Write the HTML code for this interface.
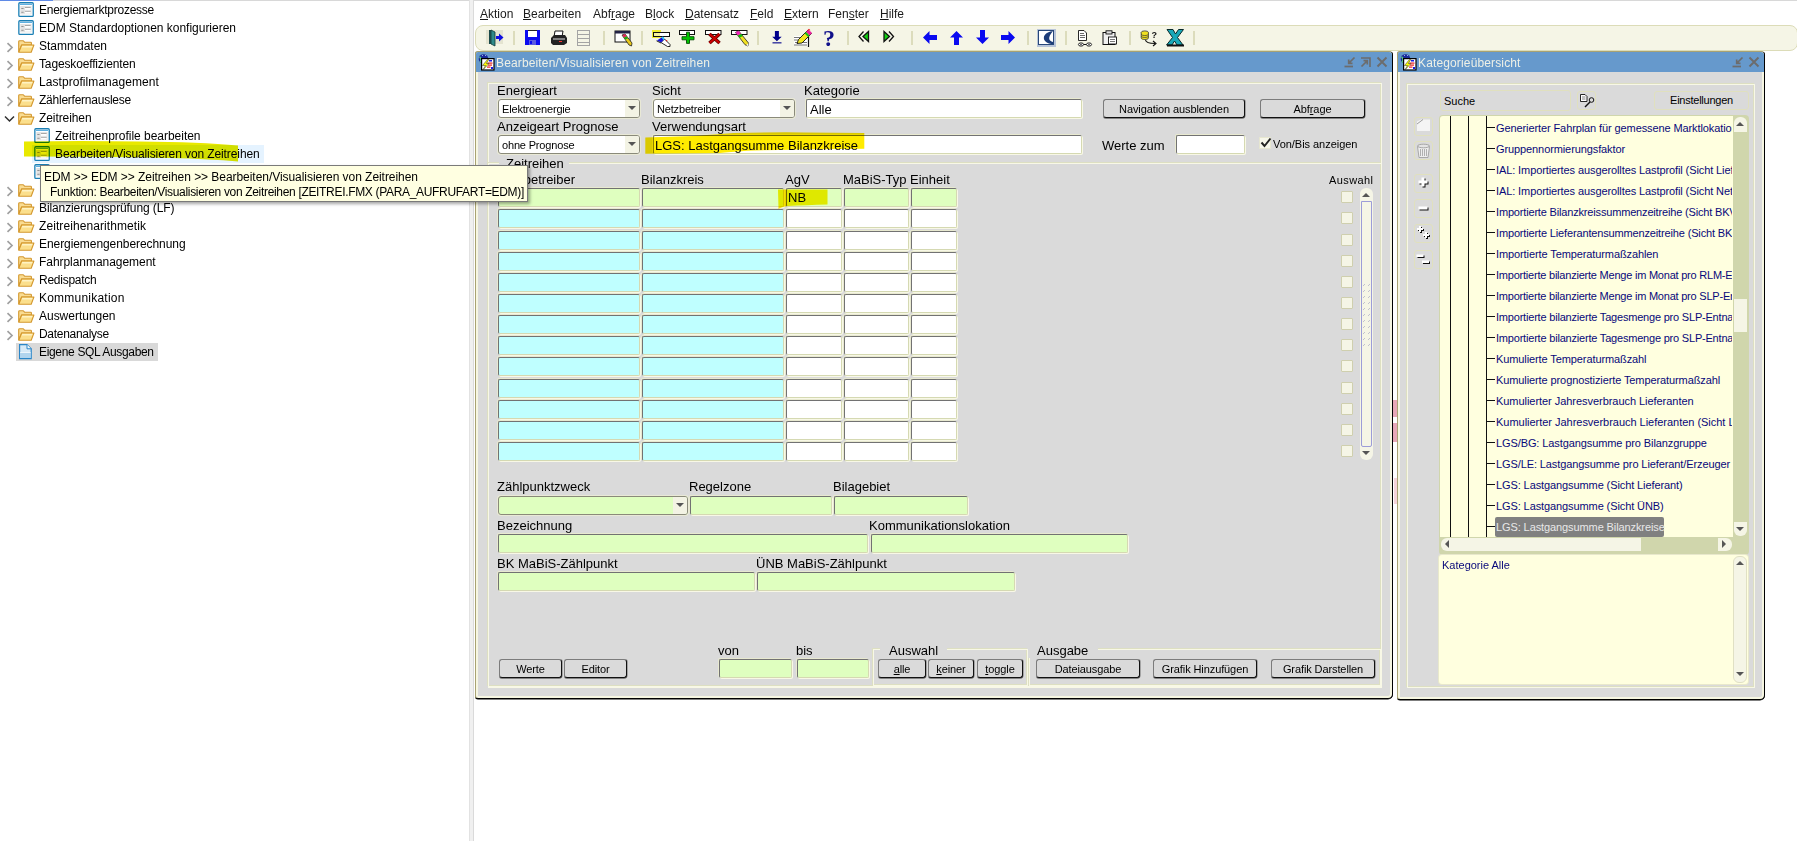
<!DOCTYPE html><html lang="de"><head><meta charset="utf-8"><title>EDM</title><style>
*{box-sizing:border-box;margin:0;padding:0}
html,body{width:1797px;height:841px;overflow:hidden;background:#fff}
body{position:relative;font-family:"Liberation Sans",sans-serif;font-size:12px;color:#000}
.a{position:absolute}
.t{position:absolute;white-space:nowrap;line-height:1}
/* left tree */
.lt{position:absolute;white-space:nowrap;font-size:12px;line-height:18px;height:18px;color:#000}
.chev{position:absolute;width:8px;height:10px}
/* oracle forms */
.lbl{position:absolute;white-space:nowrap;font-size:13px;line-height:15px;color:#000}
.fld{position:absolute;border:1px solid;border-color:#727272 #d5d9b2 #d5d9b2 #727272;border-radius:2px;box-shadow:1px 1px 0 0 #f8f8e6,-1px -1px 0 0 #e8e9d0;background:#fff}
.cmb{position:absolute;border:1px solid #8a8a7a;border-radius:3px;background:#fff;box-shadow:0 0 0 1px #e9e9d6;font-size:11px;line-height:18px;padding-left:3px;white-space:nowrap;letter-spacing:-0.17px}
.cmb i{position:absolute;right:0;top:0;bottom:0;width:14px;background:#f3f3e4;border-radius:0 2px 2px 0}
.cmb i:after{content:"";position:absolute;left:3px;top:6px;border:4px solid transparent;border-top:4px solid #555;border-bottom:0}
.g{background:#dfffbf}
.c{background:#bfffff}
.btn{position:absolute;border:1px solid #7c7c7c;border-right-color:#111;border-bottom-color:#111;border-radius:3px;background:#dadada;font-size:11px;line-height:16px;text-align:center;white-space:nowrap;color:#000;box-shadow:0 1px 0 rgba(0,0,0,.4),1px 0 0 rgba(0,0,0,.25);letter-spacing:-0.1px}
.cb{position:absolute;width:12px;height:12px;border:1px solid #cfcfae;background:#f5f5e6;border-radius:1px}
.tr{position:absolute;white-space:nowrap;font-size:11px;line-height:21px;height:21px;color:#08087a;letter-spacing:-0.1px}
u{text-decoration:underline}
</style></head><body>
<div class="a" style="left:0;top:0;width:53px;height:1px;background:#5f8ae6"></div>
<div class="a" style="left:53px;top:0;width:1744px;height:1px;background:#d8d8d8"></div>
<div class="a" style="left:469px;top:0;width:5px;height:841px;background:#f0f0f0;border-left:1px solid #e2e2e2;border-right:1px solid #dadada"></div>
<div class="a" style="left:32px;top:145px;width:232px;height:18px;background:#e5f3ff"></div>
<div class="a" style="left:16px;top:343px;width:142px;height:18px;background:#d9d9d9"></div>
<svg class="a" style="left:18px;top:2px" width="17" height="16" viewBox="0 0 17 16"><rect x="0.850" y="0.750" width="14.400" height="13.700" rx="1" fill="#fff" stroke="#1a7fb5" stroke-width="1.300"/><rect x="2" y="2" width="12" height="1" fill="#5fb0e0"/><rect x="2.300" y="4" width="11.200" height="8.300" fill="#e2e2e2"/><rect x="3.300" y="6" width="2.300" height="0.900" fill="#8a8a8a"/><rect x="3.300" y="9.800" width="2.300" height="0.900" fill="#8a8a8a"/><rect x="7" y="5.200" width="5.600" height="0.800" fill="#9a9a9a"/><rect x="7" y="6" width="5.600" height="1.800" fill="#fff"/><rect x="7" y="9" width="5.600" height="0.800" fill="#9a9a9a"/><rect x="7" y="9.800" width="5.600" height="1.800" fill="#fff"/></svg>
<div class="lt" style="left:39px;top:1px;letter-spacing:-0.253px">Energiemarktprozesse</div>
<svg class="a" style="left:18px;top:20px" width="17" height="16" viewBox="0 0 17 16"><rect x="0.850" y="0.750" width="14.400" height="13.700" rx="1" fill="#fff" stroke="#1a7fb5" stroke-width="1.300"/><rect x="2" y="2" width="12" height="1" fill="#5fb0e0"/><rect x="2.300" y="4" width="11.200" height="8.300" fill="#e2e2e2"/><rect x="3.300" y="6" width="2.300" height="0.900" fill="#8a8a8a"/><rect x="3.300" y="9.800" width="2.300" height="0.900" fill="#8a8a8a"/><rect x="7" y="5.200" width="5.600" height="0.800" fill="#9a9a9a"/><rect x="7" y="6" width="5.600" height="1.800" fill="#fff"/><rect x="7" y="9" width="5.600" height="0.800" fill="#9a9a9a"/><rect x="7" y="9.800" width="5.600" height="1.800" fill="#fff"/></svg>
<div class="lt" style="left:39px;top:19px;letter-spacing:-0.014px">EDM Standardoptionen konfigurieren</div>
<svg class="a" style="left:6px;top:42px" width="8" height="11" viewBox="0 0 8 11"><path d="M1.500 1.200 L6 5.500 L1.500 9.800" fill="none" stroke="#a0a0a0" stroke-width="1.700"/></svg>
<svg class="a" style="left:18px;top:40px" width="17" height="14" viewBox="0 0 17 14"><path d="M0.700 12 L0.700 1.600 Q0.700 0.700 1.600 0.700 L5.200 0.700 L6.600 2.200 L12.600 2.200 Q13.400 2.200 13.400 3 L13.400 5 L3.600 5 Z" fill="#f9dc92" stroke="#d4982f" stroke-width="1.100"/><path d="M3.700 5 L15.900 5 L13.200 12.300 L0.800 12.300 Z" fill="#fbdf8c" stroke="#d4982f" stroke-width="1.100" stroke-linejoin="round"/><path d="M4.300 6 L14.600 6 L14 7.500 L3.700 7.500 Z" fill="#fff3c4"/></svg>
<div class="lt" style="left:39px;top:37px;letter-spacing:-0.005px">Stammdaten</div>
<svg class="a" style="left:6px;top:60px" width="8" height="11" viewBox="0 0 8 11"><path d="M1.500 1.200 L6 5.500 L1.500 9.800" fill="none" stroke="#a0a0a0" stroke-width="1.700"/></svg>
<svg class="a" style="left:18px;top:58px" width="17" height="14" viewBox="0 0 17 14"><path d="M0.700 12 L0.700 1.600 Q0.700 0.700 1.600 0.700 L5.200 0.700 L6.600 2.200 L12.600 2.200 Q13.400 2.200 13.400 3 L13.400 5 L3.600 5 Z" fill="#f9dc92" stroke="#d4982f" stroke-width="1.100"/><path d="M3.700 5 L15.900 5 L13.200 12.300 L0.800 12.300 Z" fill="#fbdf8c" stroke="#d4982f" stroke-width="1.100" stroke-linejoin="round"/><path d="M4.300 6 L14.600 6 L14 7.500 L3.700 7.500 Z" fill="#fff3c4"/></svg>
<div class="lt" style="left:39px;top:55px;letter-spacing:-0.149px">Tageskoeffizienten</div>
<svg class="a" style="left:6px;top:78px" width="8" height="11" viewBox="0 0 8 11"><path d="M1.500 1.200 L6 5.500 L1.500 9.800" fill="none" stroke="#a0a0a0" stroke-width="1.700"/></svg>
<svg class="a" style="left:18px;top:76px" width="17" height="14" viewBox="0 0 17 14"><path d="M0.700 12 L0.700 1.600 Q0.700 0.700 1.600 0.700 L5.200 0.700 L6.600 2.200 L12.600 2.200 Q13.400 2.200 13.400 3 L13.400 5 L3.600 5 Z" fill="#f9dc92" stroke="#d4982f" stroke-width="1.100"/><path d="M3.700 5 L15.900 5 L13.200 12.300 L0.800 12.300 Z" fill="#fbdf8c" stroke="#d4982f" stroke-width="1.100" stroke-linejoin="round"/><path d="M4.300 6 L14.600 6 L14 7.500 L3.700 7.500 Z" fill="#fff3c4"/></svg>
<div class="lt" style="left:39px;top:73px;letter-spacing:0.063px">Lastprofilmanagement</div>
<svg class="a" style="left:6px;top:96px" width="8" height="11" viewBox="0 0 8 11"><path d="M1.500 1.200 L6 5.500 L1.500 9.800" fill="none" stroke="#a0a0a0" stroke-width="1.700"/></svg>
<svg class="a" style="left:18px;top:94px" width="17" height="14" viewBox="0 0 17 14"><path d="M0.700 12 L0.700 1.600 Q0.700 0.700 1.600 0.700 L5.200 0.700 L6.600 2.200 L12.600 2.200 Q13.400 2.200 13.400 3 L13.400 5 L3.600 5 Z" fill="#f9dc92" stroke="#d4982f" stroke-width="1.100"/><path d="M3.700 5 L15.900 5 L13.200 12.300 L0.800 12.300 Z" fill="#fbdf8c" stroke="#d4982f" stroke-width="1.100" stroke-linejoin="round"/><path d="M4.300 6 L14.600 6 L14 7.500 L3.700 7.500 Z" fill="#fff3c4"/></svg>
<div class="lt" style="left:39px;top:91px;letter-spacing:-0.239px">Zählerfernauslese</div>
<svg class="a" style="left:4px;top:115px" width="11" height="8" viewBox="0 0 11 8"><path d="M1 1.5 L5.5 6 L10 1.5" fill="none" stroke="#303030" stroke-width="1.5"/></svg>
<svg class="a" style="left:18px;top:112px" width="17" height="14" viewBox="0 0 17 14"><path d="M0.700 12 L0.700 1.600 Q0.700 0.700 1.600 0.700 L5.200 0.700 L6.600 2.200 L12.600 2.200 Q13.400 2.200 13.400 3 L13.400 5 L3.600 5 Z" fill="#f9dc92" stroke="#d4982f" stroke-width="1.100"/><path d="M3.700 5 L15.900 5 L13.200 12.300 L0.800 12.300 Z" fill="#fbdf8c" stroke="#d4982f" stroke-width="1.100" stroke-linejoin="round"/><path d="M4.300 6 L14.600 6 L14 7.500 L3.700 7.500 Z" fill="#fff3c4"/></svg>
<div class="lt" style="left:39px;top:109px;letter-spacing:-0.087px">Zeitreihen</div>
<svg class="a" style="left:34px;top:128px" width="17" height="16" viewBox="0 0 17 16"><rect x="0.850" y="0.750" width="14.400" height="13.700" rx="1" fill="#fff" stroke="#1a7fb5" stroke-width="1.300"/><rect x="2" y="2" width="12" height="1" fill="#5fb0e0"/><rect x="2.300" y="4" width="11.200" height="8.300" fill="#e2e2e2"/><rect x="3.300" y="6" width="2.300" height="0.900" fill="#8a8a8a"/><rect x="3.300" y="9.800" width="2.300" height="0.900" fill="#8a8a8a"/><rect x="7" y="5.200" width="5.600" height="0.800" fill="#9a9a9a"/><rect x="7" y="6" width="5.600" height="1.800" fill="#fff"/><rect x="7" y="9" width="5.600" height="0.800" fill="#9a9a9a"/><rect x="7" y="9.800" width="5.600" height="1.800" fill="#fff"/></svg>
<div class="lt" style="left:55px;top:127px;letter-spacing:-0.021px">Zeitreihenprofile bearbeiten</div>
<svg class="a" style="left:34px;top:146px" width="17" height="16" viewBox="0 0 17 16"><rect x="0.850" y="0.750" width="14.400" height="13.700" rx="1" fill="#fff" stroke="#1a7fb5" stroke-width="1.300"/><rect x="2" y="2" width="12" height="1" fill="#5fb0e0"/><rect x="2.300" y="4" width="11.200" height="8.300" fill="#e2e2e2"/><rect x="3.300" y="6" width="2.300" height="0.900" fill="#8a8a8a"/><rect x="3.300" y="9.800" width="2.300" height="0.900" fill="#8a8a8a"/><rect x="7" y="5.200" width="5.600" height="0.800" fill="#9a9a9a"/><rect x="7" y="6" width="5.600" height="1.800" fill="#fff"/><rect x="7" y="9" width="5.600" height="0.800" fill="#9a9a9a"/><rect x="7" y="9.800" width="5.600" height="1.800" fill="#fff"/></svg>
<div class="lt" style="left:55px;top:145px;letter-spacing:-0.102px">Bearbeiten/Visualisieren von Zeitreihen</div>
<svg class="a" style="left:34px;top:164px" width="17" height="16" viewBox="0 0 17 16"><rect x="0.850" y="0.750" width="14.400" height="13.700" rx="1" fill="#fff" stroke="#1a7fb5" stroke-width="1.300"/><rect x="2" y="2" width="12" height="1" fill="#5fb0e0"/><rect x="2.300" y="4" width="11.200" height="8.300" fill="#e2e2e2"/><rect x="3.300" y="6" width="2.300" height="0.900" fill="#8a8a8a"/><rect x="3.300" y="9.800" width="2.300" height="0.900" fill="#8a8a8a"/><rect x="7" y="5.200" width="5.600" height="0.800" fill="#9a9a9a"/><rect x="7" y="6" width="5.600" height="1.800" fill="#fff"/><rect x="7" y="9" width="5.600" height="0.800" fill="#9a9a9a"/><rect x="7" y="9.800" width="5.600" height="1.800" fill="#fff"/></svg>
<svg class="a" style="left:6px;top:186px" width="8" height="11" viewBox="0 0 8 11"><path d="M1.500 1.200 L6 5.500 L1.500 9.800" fill="none" stroke="#a0a0a0" stroke-width="1.700"/></svg>
<svg class="a" style="left:18px;top:184px" width="17" height="14" viewBox="0 0 17 14"><path d="M0.700 12 L0.700 1.600 Q0.700 0.700 1.600 0.700 L5.200 0.700 L6.600 2.200 L12.600 2.200 Q13.400 2.200 13.400 3 L13.400 5 L3.600 5 Z" fill="#f9dc92" stroke="#d4982f" stroke-width="1.100"/><path d="M3.700 5 L15.900 5 L13.200 12.300 L0.800 12.300 Z" fill="#fbdf8c" stroke="#d4982f" stroke-width="1.100" stroke-linejoin="round"/><path d="M4.300 6 L14.600 6 L14 7.500 L3.700 7.500 Z" fill="#fff3c4"/></svg>
<svg class="a" style="left:6px;top:204px" width="8" height="11" viewBox="0 0 8 11"><path d="M1.500 1.200 L6 5.500 L1.500 9.800" fill="none" stroke="#a0a0a0" stroke-width="1.700"/></svg>
<svg class="a" style="left:18px;top:202px" width="17" height="14" viewBox="0 0 17 14"><path d="M0.700 12 L0.700 1.600 Q0.700 0.700 1.600 0.700 L5.200 0.700 L6.600 2.200 L12.600 2.200 Q13.400 2.200 13.400 3 L13.400 5 L3.600 5 Z" fill="#f9dc92" stroke="#d4982f" stroke-width="1.100"/><path d="M3.700 5 L15.900 5 L13.200 12.300 L0.800 12.300 Z" fill="#fbdf8c" stroke="#d4982f" stroke-width="1.100" stroke-linejoin="round"/><path d="M4.300 6 L14.600 6 L14 7.500 L3.700 7.500 Z" fill="#fff3c4"/></svg>
<div class="lt" style="left:39px;top:199px;letter-spacing:-0.111px">Bilanzierungsprüfung (LF)</div>
<svg class="a" style="left:6px;top:222px" width="8" height="11" viewBox="0 0 8 11"><path d="M1.500 1.200 L6 5.500 L1.500 9.800" fill="none" stroke="#a0a0a0" stroke-width="1.700"/></svg>
<svg class="a" style="left:18px;top:220px" width="17" height="14" viewBox="0 0 17 14"><path d="M0.700 12 L0.700 1.600 Q0.700 0.700 1.600 0.700 L5.200 0.700 L6.600 2.200 L12.600 2.200 Q13.400 2.200 13.400 3 L13.400 5 L3.600 5 Z" fill="#f9dc92" stroke="#d4982f" stroke-width="1.100"/><path d="M3.700 5 L15.900 5 L13.200 12.300 L0.800 12.300 Z" fill="#fbdf8c" stroke="#d4982f" stroke-width="1.100" stroke-linejoin="round"/><path d="M4.300 6 L14.600 6 L14 7.500 L3.700 7.500 Z" fill="#fff3c4"/></svg>
<div class="lt" style="left:39px;top:217px;letter-spacing:0.081px">Zeitreihenarithmetik</div>
<svg class="a" style="left:6px;top:240px" width="8" height="11" viewBox="0 0 8 11"><path d="M1.500 1.200 L6 5.500 L1.500 9.800" fill="none" stroke="#a0a0a0" stroke-width="1.700"/></svg>
<svg class="a" style="left:18px;top:238px" width="17" height="14" viewBox="0 0 17 14"><path d="M0.700 12 L0.700 1.600 Q0.700 0.700 1.600 0.700 L5.200 0.700 L6.600 2.200 L12.600 2.200 Q13.400 2.200 13.400 3 L13.400 5 L3.600 5 Z" fill="#f9dc92" stroke="#d4982f" stroke-width="1.100"/><path d="M3.700 5 L15.900 5 L13.200 12.300 L0.800 12.300 Z" fill="#fbdf8c" stroke="#d4982f" stroke-width="1.100" stroke-linejoin="round"/><path d="M4.300 6 L14.600 6 L14 7.500 L3.700 7.500 Z" fill="#fff3c4"/></svg>
<div class="lt" style="left:39px;top:235px;letter-spacing:-0.071px">Energiemengenberechnung</div>
<svg class="a" style="left:6px;top:258px" width="8" height="11" viewBox="0 0 8 11"><path d="M1.500 1.200 L6 5.500 L1.500 9.800" fill="none" stroke="#a0a0a0" stroke-width="1.700"/></svg>
<svg class="a" style="left:18px;top:256px" width="17" height="14" viewBox="0 0 17 14"><path d="M0.700 12 L0.700 1.600 Q0.700 0.700 1.600 0.700 L5.200 0.700 L6.600 2.200 L12.600 2.200 Q13.400 2.200 13.400 3 L13.400 5 L3.600 5 Z" fill="#f9dc92" stroke="#d4982f" stroke-width="1.100"/><path d="M3.700 5 L15.900 5 L13.200 12.300 L0.800 12.300 Z" fill="#fbdf8c" stroke="#d4982f" stroke-width="1.100" stroke-linejoin="round"/><path d="M4.300 6 L14.600 6 L14 7.500 L3.700 7.500 Z" fill="#fff3c4"/></svg>
<div class="lt" style="left:39px;top:253px;letter-spacing:-0.045px">Fahrplanmanagement</div>
<svg class="a" style="left:6px;top:276px" width="8" height="11" viewBox="0 0 8 11"><path d="M1.500 1.200 L6 5.500 L1.500 9.800" fill="none" stroke="#a0a0a0" stroke-width="1.700"/></svg>
<svg class="a" style="left:18px;top:274px" width="17" height="14" viewBox="0 0 17 14"><path d="M0.700 12 L0.700 1.600 Q0.700 0.700 1.600 0.700 L5.200 0.700 L6.600 2.200 L12.600 2.200 Q13.400 2.200 13.400 3 L13.400 5 L3.600 5 Z" fill="#f9dc92" stroke="#d4982f" stroke-width="1.100"/><path d="M3.700 5 L15.900 5 L13.200 12.300 L0.800 12.300 Z" fill="#fbdf8c" stroke="#d4982f" stroke-width="1.100" stroke-linejoin="round"/><path d="M4.300 6 L14.600 6 L14 7.500 L3.700 7.500 Z" fill="#fff3c4"/></svg>
<div class="lt" style="left:39px;top:271px;letter-spacing:-0.255px">Redispatch</div>
<svg class="a" style="left:6px;top:294px" width="8" height="11" viewBox="0 0 8 11"><path d="M1.500 1.200 L6 5.500 L1.500 9.800" fill="none" stroke="#a0a0a0" stroke-width="1.700"/></svg>
<svg class="a" style="left:18px;top:292px" width="17" height="14" viewBox="0 0 17 14"><path d="M0.700 12 L0.700 1.600 Q0.700 0.700 1.600 0.700 L5.200 0.700 L6.600 2.200 L12.600 2.200 Q13.400 2.200 13.400 3 L13.400 5 L3.600 5 Z" fill="#f9dc92" stroke="#d4982f" stroke-width="1.100"/><path d="M3.700 5 L15.900 5 L13.200 12.300 L0.800 12.300 Z" fill="#fbdf8c" stroke="#d4982f" stroke-width="1.100" stroke-linejoin="round"/><path d="M4.300 6 L14.600 6 L14 7.500 L3.700 7.500 Z" fill="#fff3c4"/></svg>
<div class="lt" style="left:39px;top:289px;letter-spacing:0.222px">Kommunikation</div>
<svg class="a" style="left:6px;top:312px" width="8" height="11" viewBox="0 0 8 11"><path d="M1.500 1.200 L6 5.500 L1.500 9.800" fill="none" stroke="#a0a0a0" stroke-width="1.700"/></svg>
<svg class="a" style="left:18px;top:310px" width="17" height="14" viewBox="0 0 17 14"><path d="M0.700 12 L0.700 1.600 Q0.700 0.700 1.600 0.700 L5.200 0.700 L6.600 2.200 L12.600 2.200 Q13.400 2.200 13.400 3 L13.400 5 L3.600 5 Z" fill="#f9dc92" stroke="#d4982f" stroke-width="1.100"/><path d="M3.700 5 L15.900 5 L13.200 12.300 L0.800 12.300 Z" fill="#fbdf8c" stroke="#d4982f" stroke-width="1.100" stroke-linejoin="round"/><path d="M4.300 6 L14.600 6 L14 7.500 L3.700 7.500 Z" fill="#fff3c4"/></svg>
<div class="lt" style="left:39px;top:307px;letter-spacing:-0.018px">Auswertungen</div>
<svg class="a" style="left:6px;top:330px" width="8" height="11" viewBox="0 0 8 11"><path d="M1.500 1.200 L6 5.500 L1.500 9.800" fill="none" stroke="#a0a0a0" stroke-width="1.700"/></svg>
<svg class="a" style="left:18px;top:328px" width="17" height="14" viewBox="0 0 17 14"><path d="M0.700 12 L0.700 1.600 Q0.700 0.700 1.600 0.700 L5.200 0.700 L6.600 2.200 L12.600 2.200 Q13.400 2.200 13.400 3 L13.400 5 L3.600 5 Z" fill="#f9dc92" stroke="#d4982f" stroke-width="1.100"/><path d="M3.700 5 L15.900 5 L13.200 12.300 L0.800 12.300 Z" fill="#fbdf8c" stroke="#d4982f" stroke-width="1.100" stroke-linejoin="round"/><path d="M4.300 6 L14.600 6 L14 7.500 L3.700 7.500 Z" fill="#fff3c4"/></svg>
<div class="lt" style="left:39px;top:325px;letter-spacing:-0.299px">Datenanalyse</div>
<svg class="a" style="left:18px;top:344px" width="15" height="16" viewBox="0 0 15 16"><path d="M1.600 0.600 L9 0.600 L13.200 4.800 L13.200 14.600 L1.600 14.600 Z" fill="#d8eaf7" stroke="#2a86c8" stroke-width="1.200"/><path d="M2.200 9 L12.600 9 L12.600 14 L2.200 14 Z" fill="#b2d5ee"/><path d="M2.200 8 L12.600 8 L12.600 9 L2.200 9 Z" fill="#eef6fc"/><path d="M9 0.600 L9 4.800 L13.200 4.800" fill="#f4fafe" stroke="#2a86c8" stroke-width="1"/></svg>
<div class="lt" style="left:39px;top:343px;letter-spacing:-0.331px">Eigene SQL Ausgaben</div>
<svg class="a" style="left:20px;top:136px;mix-blend-mode:multiply" width="225" height="30" viewBox="0 0 225 30"><path d="M4 5.500 Q60 4.500 120 5.500 Q180 6 218 9.500 L218 25.500 Q190 23 150 22 Q90 20.500 4 20.500 Z" fill="#e9e900"/></svg>
<div class="t" style="left:480px;top:7px;font-size:12px;line-height:14px;color:#1a1a1a"><u>A</u>ktion</div>
<div class="t" style="left:523px;top:7px;font-size:12px;line-height:14px;color:#1a1a1a"><u>B</u>earbeiten</div>
<div class="t" style="left:593px;top:7px;font-size:12px;line-height:14px;color:#1a1a1a">Abf<u>r</u>age</div>
<div class="t" style="left:645px;top:7px;font-size:12px;line-height:14px;color:#1a1a1a">B<u>l</u>ock</div>
<div class="t" style="left:685px;top:7px;font-size:12px;line-height:14px;color:#1a1a1a"><u>D</u>atensatz</div>
<div class="t" style="left:750px;top:7px;font-size:12px;line-height:14px;color:#1a1a1a"><u>F</u>eld</div>
<div class="t" style="left:784px;top:7px;font-size:12px;line-height:14px;color:#1a1a1a"><u>E</u>xtern</div>
<div class="t" style="left:828px;top:7px;font-size:12px;line-height:14px;color:#1a1a1a">Fen<u>s</u>ter</div>
<div class="t" style="left:880px;top:7px;font-size:12px;line-height:14px;color:#1a1a1a"><u>H</u>ilfe</div>
<div class="a" style="left:475px;top:25px;width:1323px;height:26px;background:#f5f5e6;border:1px solid #dcdcb8;border-radius:8px"></div>
<div class="a" style="left:513px;top:31px;width:2px;height:14px;background:#dcdcbc"></div>
<div class="a" style="left:603px;top:31px;width:2px;height:14px;background:#dcdcbc"></div>
<div class="a" style="left:641px;top:31px;width:2px;height:14px;background:#dcdcbc"></div>
<div class="a" style="left:757px;top:31px;width:2px;height:14px;background:#dcdcbc"></div>
<div class="a" style="left:847px;top:31px;width:2px;height:14px;background:#dcdcbc"></div>
<div class="a" style="left:911px;top:31px;width:2px;height:14px;background:#dcdcbc"></div>
<div class="a" style="left:1027px;top:31px;width:2px;height:14px;background:#dcdcbc"></div>
<div class="a" style="left:1065px;top:31px;width:2px;height:14px;background:#dcdcbc"></div>
<div class="a" style="left:1129px;top:31px;width:2px;height:14px;background:#dcdcbc"></div>
<div class="a" style="left:1193px;top:31px;width:2px;height:14px;background:#dcdcbc"></div>
<svg class="a" style="left:486px;top:29px" width="18" height="18" viewBox="0 0 18 18"><rect x="0" y="1" width="17" height="14" fill="#e4e4d0"/><path d="M5 1 L9 3 L9 17 L5 15 Z" fill="#2f8a8a" stroke="#103838" stroke-width="0.8"/><path d="M3 1 L5 1 L5 15 L3 15 Z" fill="#1a4a4a"/><path d="M10 7 L13 7 L13 4.5 L17.5 8.5 L13 12.5 L13 10 L10 10 Z" fill="#1010e0"/></svg>
<svg class="a" style="left:525px;top:30px" width="15" height="15" viewBox="0 0 15 15"><path d="M0 0 H15 V15 H0 Z" fill="#0b0bf0"/><rect x="3" y="1" width="9" height="6" fill="#fff"/><rect x="3" y="0" width="9" height="1" fill="#222" /><rect x="4" y="10" width="7" height="5" fill="#5a5ae0"/><rect x="5" y="11" width="2" height="3" fill="#0b0bf0"/></svg>
<svg class="a" style="left:550px;top:30px" width="18" height="16" viewBox="0 0 18 16"><path d="M5 1 L13 1 L12 7 L4 7 Z" fill="#fff" stroke="#111"/><path d="M1 8 L4 5 L15 5 L17 8 L17 13 L14 15 L3 15 L1 13 Z" fill="#222"/><path d="M3 9 L15 9" stroke="#ddd" stroke-width="1"/><rect x="9" y="11" width="3" height="1" fill="#f33"/></svg>
<svg class="a" style="left:577px;top:30px" width="13" height="16" viewBox="0 0 13 16"><rect x="0.500" y="0.500" width="12" height="15" fill="#f5f5e6" stroke="#a4a4a4"/><path d="M1 4.500 H12 M1 8.500 H12 M1 12.500 H12" stroke="#a4a4a4" stroke-width="1"/></svg>
<svg class="a" style="left:614px;top:30px" width="20" height="18" viewBox="0 0 20 18"><rect x="1" y="1" width="15" height="11" fill="#fff" stroke="#111"/><rect x="1" y="1" width="15" height="2.5" fill="#224"/><path d="M8 5 L11 4 L18 13 L17.5 16 L15 15 Z" fill="#e8c81c" stroke="#222" stroke-width="0.8"/><path d="M8.5 5 L11 4 L12.5 6.5 L10 7.5Z" fill="#e02060"/><path d="M10 7.5 L12.5 6.5 L14 8.5 L11.5 9.5Z" fill="#18b018"/></svg>
<svg class="a" style="left:651px;top:29px" width="20" height="19" viewBox="0 0 20 19"><rect x="1" y="1" width="9" height="8" fill="#f0ec30"/><rect x="2.500" y="3.500" width="16" height="4" fill="#fff" stroke="#111"/><rect x="3" y="4" width="6" height="3" fill="#f6f29a"/><path d="M10 13.500 L13.500 10 L19 15.500 L19 17.500 L16.500 17.500 Z" fill="#fff" stroke="#111" stroke-width="0.900"/><path d="M6 11.500 L12 7.500 L13.500 10 L10 13.500 Z" fill="#1414e0"/><path d="M10.500 8.300 L12 7.500 L13.500 10 L12.300 11 Z" fill="#30d8f0"/><path d="M5.500 11.800 L10 14" stroke="#111" stroke-width="0.900"/><rect x="15" y="11" width="1.200" height="1.200" fill="#e02020"/></svg>
<svg class="a" style="left:678px;top:29px" width="19" height="18" viewBox="0 0 19 18"><rect x="1.500" y="1.500" width="15" height="4" fill="#fff" stroke="#111"/><path d="M8.500 3.200 H11.500 V7.700 H16 V10.800 H11.500 V14.400 H8.500 V10.800 H4 V7.700 H8.500 Z" fill="#00c400" stroke="#064a06" stroke-width="0.900"/></svg>
<svg class="a" style="left:704px;top:29px" width="19" height="18" viewBox="0 0 19 18"><rect x="1.500" y="1.500" width="15.500" height="4" fill="#fff" stroke="#111"/><path d="M5.500 5 L15.500 14 M15.500 5 L5.500 14" stroke="#500" stroke-width="3.600"/><path d="M5.500 5 L15.500 14 M15.500 5 L5.500 14" stroke="#cc0000" stroke-width="2.200"/></svg>
<svg class="a" style="left:730px;top:29px" width="20" height="18" viewBox="0 0 20 18"><rect x="1.500" y="1.500" width="15.500" height="4" fill="#fff" stroke="#111"/><path d="M5.500 3.500 L8.500 1.800 L18.500 14 L17.800 17 L15 15.700 Z" fill="#f0e020" stroke="#222" stroke-width="0.800"/><path d="M5.500 3.500 L8.500 1.800 L11 4.800 L8 6.600Z" fill="#f020c0"/><path d="M8 6.600 L11 4.800 L12.800 7 L9.800 8.800Z" fill="#10b810"/><path d="M16.300 16.300 L18.500 14 L17.800 17 Z" fill="#fff"/></svg>
<svg class="a" style="left:771px;top:30px" width="12" height="16" viewBox="0 0 12 16"><path d="M3.900 0.900 H7.900 V6.700 H10.700 L5.900 11.300 L1.200 6.700 H3.900 Z" fill="#00008b"/><rect x="1.500" y="12.300" width="9" height="1.100" fill="#00008b"/></svg>
<svg class="a" style="left:793px;top:28px" width="20" height="20" viewBox="0 0 20 20"><rect x="1" y="8" width="14" height="9.500" fill="#fff"/><path d="M1 9.500 H8 M1 12 H7 M2 14.500 H6 M9 14.500 H14 M1 17 H14" stroke="#666" stroke-width="0.900"/><path d="M15.500 7.500 V19" stroke="#111" stroke-width="1.200"/><path d="M4 15.500 L5.500 11.500 L15 2 L18.500 5.500 L9 15 Z" fill="#f4e820" stroke="#111" stroke-width="0.900"/><path d="M13 4 L15.500 1.500 L19 5 L16.500 7.500Z" fill="#f020a0"/><path d="M11.600 5.400 L13 4 L16.500 7.500 L15.100 8.900Z" fill="#18c018"/><path d="M14 2.500 L16 0.800 L17.500 2.200" fill="#e82020"/></svg>
<div class="t" style="left:823px;top:26px;font-family:'Liberation Serif',serif;font-weight:bold;font-size:24px;line-height:24px;color:#10108a">?</div>
<svg class="a" style="left:857px;top:30px" width="14" height="14" viewBox="0 0 14 14"><path d="M6.500 1.500 L2 6.500 L6.500 11.500" fill="none" stroke="#111" stroke-width="1.300"/><path d="M11.500 1.500 L6 6.500 L11.500 11.500 Z" fill="#10d010" stroke="#111" stroke-width="1.300"/></svg>
<svg class="a" style="left:882px;top:30px" width="14" height="14" viewBox="0 0 14 14"><path d="M7 1.500 L11.500 6.500 L7 11.500" fill="none" stroke="#111" stroke-width="1.300"/><path d="M2 1.500 L7.500 6.500 L2 11.500 Z" fill="#10d010" stroke="#111" stroke-width="1.300"/></svg>
<svg class="a" style="left:922px;top:30px" width="16" height="15" viewBox="0 0 16 15"><path d="M1 7.500 L7.500 1 V5 H15 V10 H7.500 V14 Z" fill="#0a0af0"/></svg>
<svg class="a" style="left:949px;top:30px" width="15" height="16" viewBox="0 0 15 16"><path d="M7.500 1 L14 7.500 H10 V15 H5 V7.500 H1 Z" fill="#0a0af0"/></svg>
<svg class="a" style="left:975px;top:29px" width="15" height="16" viewBox="0 0 15 16"><path d="M7.500 15 L14 8.500 H10 V1 H5 V8.500 H1 Z" fill="#0a0af0"/></svg>
<svg class="a" style="left:1000px;top:30px" width="16" height="15" viewBox="0 0 16 15"><path d="M15 7.500 L8.500 1 V5 H1 V10 H8.500 V14 Z" fill="#0a0af0"/></svg>
<svg class="a" style="left:1037px;top:29px" width="19" height="18" viewBox="0 0 19 18"><rect x="0" y="0" width="19" height="18" fill="#b8c4d8"/><rect x="1.500" y="1.500" width="15" height="14" fill="#fff" stroke="#28487a"/><path d="M16 2 C8 3 5 8 8 12 C10 14.500 14 15 16 15 L16 13 C12 12 10 9 16 2 Z" fill="#1c3c78"/></svg>
<svg class="a" style="left:1076px;top:30px" width="18" height="18" viewBox="0 0 18 18"><path d="M2.500 0.500 H8 L10.500 3 V10.500 H2.500 Z" fill="#fff" stroke="#111" stroke-width="0.900"/><path d="M4 3.500 H8 M4 5.500 H9 M4 7.500 H9" stroke="#444" stroke-width="0.800"/><ellipse cx="5" cy="14.500" rx="2.600" ry="1.600" fill="#fff" stroke="#111" stroke-width="0.900"/><ellipse cx="13" cy="14.500" rx="2.600" ry="1.600" fill="#fff" stroke="#111" stroke-width="0.900"/><path d="M7.600 14.500 H10.400" stroke="#111"/><circle cx="5" cy="14.500" r="0.700" fill="#111"/><circle cx="13" cy="14.500" r="0.700" fill="#111"/></svg>
<svg class="a" style="left:1102px;top:30px" width="17" height="16" viewBox="0 0 17 16"><rect x="1" y="2.500" width="12" height="12" fill="#f0f0f0" stroke="#111"/><rect x="4" y="0.800" width="6" height="3.200" fill="#ddd" stroke="#111" stroke-width="0.900"/><rect x="6.500" y="7" width="8" height="7" fill="#fff" stroke="#111" stroke-width="0.900"/><path d="M8 9.500 H13 M8 11.500 H13" stroke="#555" stroke-width="0.800"/></svg>
<svg class="a" style="left:1140px;top:29px" width="20" height="19" viewBox="0 0 20 19"><ellipse cx="4.800" cy="3.500" rx="3.600" ry="1.600" fill="#f0e020" stroke="#333" stroke-width="0.800"/><path d="M1.200 3.500 V9 C1.200 11 8.400 11 8.400 9 V3.500" fill="#f0e020" stroke="#333" stroke-width="0.800"/><path d="M1.200 5.300 C1.700 7 7.900 7 8.400 5.300 M1.200 7.200 C1.700 8.900 7.900 8.900 8.400 7.200" fill="none" stroke="#333" stroke-width="0.700"/><path d="M5.500 11 C6 14 10 14.500 15 14.500 M13 12 L16 14.500 L13 17" fill="none" stroke="#111" stroke-width="1.100"/><text x="11.500" y="9" font-family="Liberation Sans, sans-serif" font-weight="bold" font-size="9" fill="#111">?</text></svg>
<svg class="a" style="left:1165px;top:28px" width="20" height="20" viewBox="0 0 20 20"><path d="M2 1.500 H8 L10.500 6 L13.500 1.500 H18.500 L12.500 9.500 L18 17 H12 L9.500 13 L7 17 H1.500 L7.500 9.500 Z" fill="#18a8b8" stroke="#0a2a2a" stroke-width="1"/><path d="M2 17.500 H19" stroke="#111" stroke-width="2"/></svg>
<div class="a" style="left:475px;top:51px;width:918px;height:648px;background:#f6f6e2;border-radius:3px 4px 5px 3px;border-left:1px solid #a8a272;border-top:1px solid #a8a272;border-right:1px solid #000;border-bottom:1px solid #000;box-shadow:0 0.5px 0 #000"></div>
<div class="a" style="left:478px;top:72px;width:912px;height:624px;background:#dadada;border-radius:0 0 2px 0"></div>
<div class="a" style="left:476px;top:52px;width:916px;height:20px;background:#6699cc;border-radius:2px 3px 0 0"></div>
<svg class="a" style="left:478px;top:54px" width="17" height="17" viewBox="0 0 17 17"><circle cx="5.500" cy="5" r="4.800" fill="#1a2a9a"/><path d="M1.500 3 C3.500 4 3.500 7 2 8.500" stroke="#5ac87a" stroke-width="1.600" fill="none"/><path d="M4 1 L5 2 M7 1 L8 2" stroke="#b8c8ff" stroke-width="0.800"/><rect x="3.600" y="4.600" width="12.400" height="11.400" fill="#fff" stroke="#000" stroke-width="1.200"/><rect x="11" y="6" width="3" height="1.500" fill="#1a1ae0"/><rect x="9.500" y="8.500" width="5" height="1.200" fill="#e82020"/><rect x="10" y="10.500" width="4" height="1.200" fill="#e82020"/><rect x="9" y="12.500" width="3.500" height="1.200" fill="#e82020"/><rect x="13" y="13" width="2" height="2" fill="#1a1ae0"/><path d="M9.500 5.500 L4.500 11.500 H7.500 L5 15.800 L11 9.500 H8.300 L10.800 5.500 Z" fill="#ffff00" stroke="#222" stroke-width="0.500"/></svg>
<div class="t" style="left:496px;top:56px;font-size:12px;line-height:14px;color:#eef0e6;letter-spacing:0.14px">Bearbeiten/Visualisieren von Zeitreihen</div>
<svg class="a" style="left:1376px;top:56px" width="12" height="12" viewBox="0 0 12 12"><path d="M1.500 1.500 L10.500 10.500 M10.500 1.500 L1.500 10.500" stroke="#6c6c6c" stroke-width="1.900"/></svg>
<svg class="a" style="left:1360px;top:56px" width="12" height="12" viewBox="0 0 12 12"><path d="M1 2 H10 V11" fill="none" stroke="#6c6c6c" stroke-width="1.600"/><path d="M1.500 10.500 L7 5 M3.500 4.700 H7.300 V8.500" fill="none" stroke="#6c6c6c" stroke-width="1.700"/></svg>
<svg class="a" style="left:1344px;top:56px" width="12" height="12" viewBox="0 0 12 12"><path d="M0.500 10.500 H9" stroke="#6c6c6c" stroke-width="1.700"/><path d="M10.500 1.500 L5 7 M4.700 3.500 V7.300 H8.500" fill="none" stroke="#6c6c6c" stroke-width="1.700"/></svg>
<div class="a" style="left:487px;top:82px;width:894px;height:604px;border:1px solid #dddfc2"></div>
<div class="a" style="left:488px;top:83px;width:894px;height:605px;border:1px solid #f8f8e6;border-bottom-width:2px"></div>
<div class="a" style="left:488px;top:162px;width:893px;height:2px;background:#f8f8e6;border-top:1px solid #dddfc2"></div>
<div class="lbl" style="left:497px;top:83px;font-size:13px">Energieart</div>
<div class="lbl" style="left:652px;top:83px;font-size:13px">Sicht</div>
<div class="lbl" style="left:804px;top:83px;font-size:13px">Kategorie</div>
<div class="cmb " style="left:498px;top:99px;width:142px;height:19px">Elektroenergie<i></i></div>
<div class="cmb " style="left:653px;top:99px;width:142px;height:19px">Netzbetreiber<i></i></div>
<div class="fld " style="left:806px;top:99px;width:276px;height:19px;font-size:13px;line-height:17px;padding-left:3px;white-space:nowrap;overflow:hidden"><span style="position:relative;top:1px">Alle</span></div>
<div class="btn" style="left:1103px;top:99px;width:142px;height:19px;line-height:19px">Navigation ausblenden</div>
<div class="btn" style="left:1260px;top:99px;width:105px;height:19px;line-height:19px">Abf<u>r</u>age</div>
<div class="lbl" style="left:497px;top:119px;font-size:13px">Anzeigeart Prognose</div>
<div class="lbl" style="left:652px;top:119px;font-size:13px">Verwendungsart</div>
<div class="cmb " style="left:498px;top:135px;width:142px;height:19px">ohne Prognose<i></i></div>
<div class="fld " style="left:653px;top:135px;width:429px;height:19px;font-size:13px;line-height:17px;padding-left:3px;white-space:nowrap;overflow:hidden"></div>
<div class="lbl" style="left:655px;top:138px">LGS: Lastgangsumme Bilanzkreise</div>
<div class="a" style="left:653px;top:136px;width:1px;height:17px;background:#8a8a70"></div>
<svg class="a" style="left:644px;top:131px;mix-blend-mode:multiply" width="224" height="26" viewBox="0 0 224 26"><path d="M1.300 6.400 L49.400 5 Q70 3.500 89.500 2 Q130 1 160 1.400 L220.300 2 L220.300 17.700 L156 18.400 Q120 19 102.800 19.700 Q85 21 76 22 L1.300 22.800 Z" fill="#ffeb00"/></svg>
<div class="lbl" style="left:1102px;top:138px;font-size:13px">Werte zum</div>
<div class="fld " style="left:1176px;top:135px;width:69px;height:19px;font-size:13px;line-height:17px;padding-left:3px;white-space:nowrap;overflow:hidden"></div>
<div class="a" style="left:1259px;top:137px;width:12px;height:12px;background:#f6f6ea;border:1px solid #e6e6d0"></div>
<svg class="a" style="left:1260px;top:137px" width="12" height="12" viewBox="0 0 12 12"><path d="M1.500 5.500 L4.500 9 L10.500 1.500" fill="none" stroke="#222" stroke-width="2"/></svg>
<div class="t" style="left:1273px;top:138px;font-size:11px;line-height:13px;letter-spacing:-0.04px">Von/Bis anzeigen</div>
<div class="a" style="left:499px;top:160px;width:70px;height:6px;background:#dadada"></div>
<div class="lbl" style="left:506px;top:156px;font-size:13px">Zeitreihen</div>
<div class="lbl" style="left:497px;top:172px;font-size:13px">Netzbetreiber</div>
<div class="lbl" style="left:641px;top:172px;font-size:13px">Bilanzkreis</div>
<div class="lbl" style="left:785px;top:172px;font-size:13px">AgV</div>
<div class="lbl" style="left:843px;top:172px;font-size:13px">MaBiS-Typ</div>
<div class="lbl" style="left:910px;top:172px;font-size:13px">Einheit</div>
<div class="t" style="left:1329px;top:174px;font-size:11px;line-height:13px;letter-spacing:0.4px">Auswahl</div>
<div class="fld g" style="left:498px;top:188px;width:142px;height:19px;font-size:13px;line-height:17px;padding-left:3px;white-space:nowrap;overflow:hidden"></div>
<div class="fld g" style="left:642px;top:188px;width:142px;height:19px;font-size:13px;line-height:17px;padding-left:3px;white-space:nowrap;overflow:hidden"></div>
<div class="fld g" style="left:786px;top:188px;width:56px;height:19px;font-size:13px;line-height:17px;padding-left:3px;white-space:nowrap;overflow:hidden"></div>
<div class="fld g" style="left:844px;top:188px;width:65px;height:19px;font-size:13px;line-height:17px;padding-left:3px;white-space:nowrap;overflow:hidden"></div>
<div class="fld g" style="left:911px;top:188px;width:46px;height:19px;font-size:13px;line-height:17px;padding-left:3px;white-space:nowrap;overflow:hidden"></div>
<div class="cb" style="left:1341px;top:191px"></div>
<div class="fld c" style="left:498px;top:209px;width:142px;height:19px;font-size:13px;line-height:17px;padding-left:3px;white-space:nowrap;overflow:hidden"></div>
<div class="fld c" style="left:642px;top:209px;width:142px;height:19px;font-size:13px;line-height:17px;padding-left:3px;white-space:nowrap;overflow:hidden"></div>
<div class="fld " style="left:786px;top:209px;width:56px;height:19px;font-size:13px;line-height:17px;padding-left:3px;white-space:nowrap;overflow:hidden"></div>
<div class="fld " style="left:844px;top:209px;width:65px;height:19px;font-size:13px;line-height:17px;padding-left:3px;white-space:nowrap;overflow:hidden"></div>
<div class="fld " style="left:911px;top:209px;width:46px;height:19px;font-size:13px;line-height:17px;padding-left:3px;white-space:nowrap;overflow:hidden"></div>
<div class="cb" style="left:1341px;top:212px"></div>
<div class="fld c" style="left:498px;top:231px;width:142px;height:19px;font-size:13px;line-height:17px;padding-left:3px;white-space:nowrap;overflow:hidden"></div>
<div class="fld c" style="left:642px;top:231px;width:142px;height:19px;font-size:13px;line-height:17px;padding-left:3px;white-space:nowrap;overflow:hidden"></div>
<div class="fld " style="left:786px;top:231px;width:56px;height:19px;font-size:13px;line-height:17px;padding-left:3px;white-space:nowrap;overflow:hidden"></div>
<div class="fld " style="left:844px;top:231px;width:65px;height:19px;font-size:13px;line-height:17px;padding-left:3px;white-space:nowrap;overflow:hidden"></div>
<div class="fld " style="left:911px;top:231px;width:46px;height:19px;font-size:13px;line-height:17px;padding-left:3px;white-space:nowrap;overflow:hidden"></div>
<div class="cb" style="left:1341px;top:234px"></div>
<div class="fld c" style="left:498px;top:252px;width:142px;height:19px;font-size:13px;line-height:17px;padding-left:3px;white-space:nowrap;overflow:hidden"></div>
<div class="fld c" style="left:642px;top:252px;width:142px;height:19px;font-size:13px;line-height:17px;padding-left:3px;white-space:nowrap;overflow:hidden"></div>
<div class="fld " style="left:786px;top:252px;width:56px;height:19px;font-size:13px;line-height:17px;padding-left:3px;white-space:nowrap;overflow:hidden"></div>
<div class="fld " style="left:844px;top:252px;width:65px;height:19px;font-size:13px;line-height:17px;padding-left:3px;white-space:nowrap;overflow:hidden"></div>
<div class="fld " style="left:911px;top:252px;width:46px;height:19px;font-size:13px;line-height:17px;padding-left:3px;white-space:nowrap;overflow:hidden"></div>
<div class="cb" style="left:1341px;top:255px"></div>
<div class="fld c" style="left:498px;top:273px;width:142px;height:19px;font-size:13px;line-height:17px;padding-left:3px;white-space:nowrap;overflow:hidden"></div>
<div class="fld c" style="left:642px;top:273px;width:142px;height:19px;font-size:13px;line-height:17px;padding-left:3px;white-space:nowrap;overflow:hidden"></div>
<div class="fld " style="left:786px;top:273px;width:56px;height:19px;font-size:13px;line-height:17px;padding-left:3px;white-space:nowrap;overflow:hidden"></div>
<div class="fld " style="left:844px;top:273px;width:65px;height:19px;font-size:13px;line-height:17px;padding-left:3px;white-space:nowrap;overflow:hidden"></div>
<div class="fld " style="left:911px;top:273px;width:46px;height:19px;font-size:13px;line-height:17px;padding-left:3px;white-space:nowrap;overflow:hidden"></div>
<div class="cb" style="left:1341px;top:276px"></div>
<div class="fld c" style="left:498px;top:294px;width:142px;height:19px;font-size:13px;line-height:17px;padding-left:3px;white-space:nowrap;overflow:hidden"></div>
<div class="fld c" style="left:642px;top:294px;width:142px;height:19px;font-size:13px;line-height:17px;padding-left:3px;white-space:nowrap;overflow:hidden"></div>
<div class="fld " style="left:786px;top:294px;width:56px;height:19px;font-size:13px;line-height:17px;padding-left:3px;white-space:nowrap;overflow:hidden"></div>
<div class="fld " style="left:844px;top:294px;width:65px;height:19px;font-size:13px;line-height:17px;padding-left:3px;white-space:nowrap;overflow:hidden"></div>
<div class="fld " style="left:911px;top:294px;width:46px;height:19px;font-size:13px;line-height:17px;padding-left:3px;white-space:nowrap;overflow:hidden"></div>
<div class="cb" style="left:1341px;top:297px"></div>
<div class="fld c" style="left:498px;top:315px;width:142px;height:19px;font-size:13px;line-height:17px;padding-left:3px;white-space:nowrap;overflow:hidden"></div>
<div class="fld c" style="left:642px;top:315px;width:142px;height:19px;font-size:13px;line-height:17px;padding-left:3px;white-space:nowrap;overflow:hidden"></div>
<div class="fld " style="left:786px;top:315px;width:56px;height:19px;font-size:13px;line-height:17px;padding-left:3px;white-space:nowrap;overflow:hidden"></div>
<div class="fld " style="left:844px;top:315px;width:65px;height:19px;font-size:13px;line-height:17px;padding-left:3px;white-space:nowrap;overflow:hidden"></div>
<div class="fld " style="left:911px;top:315px;width:46px;height:19px;font-size:13px;line-height:17px;padding-left:3px;white-space:nowrap;overflow:hidden"></div>
<div class="cb" style="left:1341px;top:318px"></div>
<div class="fld c" style="left:498px;top:336px;width:142px;height:19px;font-size:13px;line-height:17px;padding-left:3px;white-space:nowrap;overflow:hidden"></div>
<div class="fld c" style="left:642px;top:336px;width:142px;height:19px;font-size:13px;line-height:17px;padding-left:3px;white-space:nowrap;overflow:hidden"></div>
<div class="fld " style="left:786px;top:336px;width:56px;height:19px;font-size:13px;line-height:17px;padding-left:3px;white-space:nowrap;overflow:hidden"></div>
<div class="fld " style="left:844px;top:336px;width:65px;height:19px;font-size:13px;line-height:17px;padding-left:3px;white-space:nowrap;overflow:hidden"></div>
<div class="fld " style="left:911px;top:336px;width:46px;height:19px;font-size:13px;line-height:17px;padding-left:3px;white-space:nowrap;overflow:hidden"></div>
<div class="cb" style="left:1341px;top:339px"></div>
<div class="fld c" style="left:498px;top:357px;width:142px;height:19px;font-size:13px;line-height:17px;padding-left:3px;white-space:nowrap;overflow:hidden"></div>
<div class="fld c" style="left:642px;top:357px;width:142px;height:19px;font-size:13px;line-height:17px;padding-left:3px;white-space:nowrap;overflow:hidden"></div>
<div class="fld " style="left:786px;top:357px;width:56px;height:19px;font-size:13px;line-height:17px;padding-left:3px;white-space:nowrap;overflow:hidden"></div>
<div class="fld " style="left:844px;top:357px;width:65px;height:19px;font-size:13px;line-height:17px;padding-left:3px;white-space:nowrap;overflow:hidden"></div>
<div class="fld " style="left:911px;top:357px;width:46px;height:19px;font-size:13px;line-height:17px;padding-left:3px;white-space:nowrap;overflow:hidden"></div>
<div class="cb" style="left:1341px;top:360px"></div>
<div class="fld c" style="left:498px;top:379px;width:142px;height:19px;font-size:13px;line-height:17px;padding-left:3px;white-space:nowrap;overflow:hidden"></div>
<div class="fld c" style="left:642px;top:379px;width:142px;height:19px;font-size:13px;line-height:17px;padding-left:3px;white-space:nowrap;overflow:hidden"></div>
<div class="fld " style="left:786px;top:379px;width:56px;height:19px;font-size:13px;line-height:17px;padding-left:3px;white-space:nowrap;overflow:hidden"></div>
<div class="fld " style="left:844px;top:379px;width:65px;height:19px;font-size:13px;line-height:17px;padding-left:3px;white-space:nowrap;overflow:hidden"></div>
<div class="fld " style="left:911px;top:379px;width:46px;height:19px;font-size:13px;line-height:17px;padding-left:3px;white-space:nowrap;overflow:hidden"></div>
<div class="cb" style="left:1341px;top:382px"></div>
<div class="fld c" style="left:498px;top:400px;width:142px;height:19px;font-size:13px;line-height:17px;padding-left:3px;white-space:nowrap;overflow:hidden"></div>
<div class="fld c" style="left:642px;top:400px;width:142px;height:19px;font-size:13px;line-height:17px;padding-left:3px;white-space:nowrap;overflow:hidden"></div>
<div class="fld " style="left:786px;top:400px;width:56px;height:19px;font-size:13px;line-height:17px;padding-left:3px;white-space:nowrap;overflow:hidden"></div>
<div class="fld " style="left:844px;top:400px;width:65px;height:19px;font-size:13px;line-height:17px;padding-left:3px;white-space:nowrap;overflow:hidden"></div>
<div class="fld " style="left:911px;top:400px;width:46px;height:19px;font-size:13px;line-height:17px;padding-left:3px;white-space:nowrap;overflow:hidden"></div>
<div class="cb" style="left:1341px;top:403px"></div>
<div class="fld c" style="left:498px;top:421px;width:142px;height:19px;font-size:13px;line-height:17px;padding-left:3px;white-space:nowrap;overflow:hidden"></div>
<div class="fld c" style="left:642px;top:421px;width:142px;height:19px;font-size:13px;line-height:17px;padding-left:3px;white-space:nowrap;overflow:hidden"></div>
<div class="fld " style="left:786px;top:421px;width:56px;height:19px;font-size:13px;line-height:17px;padding-left:3px;white-space:nowrap;overflow:hidden"></div>
<div class="fld " style="left:844px;top:421px;width:65px;height:19px;font-size:13px;line-height:17px;padding-left:3px;white-space:nowrap;overflow:hidden"></div>
<div class="fld " style="left:911px;top:421px;width:46px;height:19px;font-size:13px;line-height:17px;padding-left:3px;white-space:nowrap;overflow:hidden"></div>
<div class="cb" style="left:1341px;top:424px"></div>
<div class="fld c" style="left:498px;top:442px;width:142px;height:19px;font-size:13px;line-height:17px;padding-left:3px;white-space:nowrap;overflow:hidden"></div>
<div class="fld c" style="left:642px;top:442px;width:142px;height:19px;font-size:13px;line-height:17px;padding-left:3px;white-space:nowrap;overflow:hidden"></div>
<div class="fld " style="left:786px;top:442px;width:56px;height:19px;font-size:13px;line-height:17px;padding-left:3px;white-space:nowrap;overflow:hidden"></div>
<div class="fld " style="left:844px;top:442px;width:65px;height:19px;font-size:13px;line-height:17px;padding-left:3px;white-space:nowrap;overflow:hidden"></div>
<div class="fld " style="left:911px;top:442px;width:46px;height:19px;font-size:13px;line-height:17px;padding-left:3px;white-space:nowrap;overflow:hidden"></div>
<div class="cb" style="left:1341px;top:445px"></div>
<div class="lbl" style="left:788px;top:190px">NB</div>
<svg class="a" style="left:776px;top:187px;mix-blend-mode:multiply" width="54" height="24" viewBox="0 0 54 24"><path d="M2 2.500 L51.500 2.500 L51.500 17.500 Q30 18 12 19 Q5 20 2.500 22 Z" fill="#ffe800"/></svg>
<div class="a" style="left:1360px;top:188px;width:13px;height:272px;background:#f5f5e6;border-radius:6px"></div>
<div class="a" style="left:1361px;top:201px;width:11px;height:246px;background:#f5f5e6;border:1px solid #9c9cd8;border-radius:0 0 2px 2px"></div>
<div class="a" style="left:1362px;top:193px;border:4px solid transparent;border-bottom:4px solid #555;border-top:0"></div>
<div class="a" style="left:1362px;top:451px;border:4px solid transparent;border-top:4px solid #555;border-bottom:0"></div>
<svg class="a" style="left:1362px;top:282px" width="10" height="68" viewBox="0 0 10 68"><path d="M1 4 l2 -2" stroke="#b4b4c8" stroke-width="0.800"/><path d="M6 4 l2 -2" stroke="#b4b4c8" stroke-width="0.800"/><path d="M1 10 l2 -2" stroke="#b4b4c8" stroke-width="0.800"/><path d="M6 10 l2 -2" stroke="#b4b4c8" stroke-width="0.800"/><path d="M1 16 l2 -2" stroke="#b4b4c8" stroke-width="0.800"/><path d="M6 16 l2 -2" stroke="#b4b4c8" stroke-width="0.800"/><path d="M1 22 l2 -2" stroke="#b4b4c8" stroke-width="0.800"/><path d="M6 22 l2 -2" stroke="#b4b4c8" stroke-width="0.800"/><path d="M1 28 l2 -2" stroke="#b4b4c8" stroke-width="0.800"/><path d="M6 28 l2 -2" stroke="#b4b4c8" stroke-width="0.800"/><path d="M1 34 l2 -2" stroke="#b4b4c8" stroke-width="0.800"/><path d="M6 34 l2 -2" stroke="#b4b4c8" stroke-width="0.800"/><path d="M1 40 l2 -2" stroke="#b4b4c8" stroke-width="0.800"/><path d="M6 40 l2 -2" stroke="#b4b4c8" stroke-width="0.800"/><path d="M1 46 l2 -2" stroke="#b4b4c8" stroke-width="0.800"/><path d="M6 46 l2 -2" stroke="#b4b4c8" stroke-width="0.800"/><path d="M1 52 l2 -2" stroke="#b4b4c8" stroke-width="0.800"/><path d="M6 52 l2 -2" stroke="#b4b4c8" stroke-width="0.800"/><path d="M1 58 l2 -2" stroke="#b4b4c8" stroke-width="0.800"/><path d="M6 58 l2 -2" stroke="#b4b4c8" stroke-width="0.800"/><path d="M1 64 l2 -2" stroke="#b4b4c8" stroke-width="0.800"/><path d="M6 64 l2 -2" stroke="#b4b4c8" stroke-width="0.800"/></svg>
<div class="lbl" style="left:497px;top:479px;font-size:13px">Zählpunktzweck</div>
<div class="lbl" style="left:689px;top:479px;font-size:13px">Regelzone</div>
<div class="lbl" style="left:833px;top:479px;font-size:13px">Bilagebiet</div>
<div class="cmb g" style="left:498px;top:496px;width:190px;height:19px"><i></i></div>
<div class="fld g" style="left:690px;top:496px;width:142px;height:19px;font-size:13px;line-height:17px;padding-left:3px;white-space:nowrap;overflow:hidden"></div>
<div class="fld g" style="left:834px;top:496px;width:134px;height:19px;font-size:13px;line-height:17px;padding-left:3px;white-space:nowrap;overflow:hidden"></div>
<div class="lbl" style="left:497px;top:518px;font-size:13px">Bezeichnung</div>
<div class="lbl" style="left:869px;top:518px;font-size:13px">Kommunikationslokation</div>
<div class="fld g" style="left:498px;top:534px;width:370px;height:19px;font-size:13px;line-height:17px;padding-left:3px;white-space:nowrap;overflow:hidden"></div>
<div class="fld g" style="left:871px;top:534px;width:257px;height:19px;font-size:13px;line-height:17px;padding-left:3px;white-space:nowrap;overflow:hidden"></div>
<div class="lbl" style="left:497px;top:556px;font-size:13px">BK MaBiS-Zählpunkt</div>
<div class="lbl" style="left:756px;top:556px;font-size:13px">ÜNB MaBiS-Zählpunkt</div>
<div class="fld g" style="left:498px;top:572px;width:257px;height:19px;font-size:13px;line-height:17px;padding-left:3px;white-space:nowrap;overflow:hidden"></div>
<div class="fld g" style="left:757px;top:572px;width:258px;height:19px;font-size:13px;line-height:17px;padding-left:3px;white-space:nowrap;overflow:hidden"></div>
<div class="btn" style="left:499px;top:659px;width:63px;height:19px;line-height:19px">Werte</div>
<div class="btn" style="left:564px;top:659px;width:63px;height:19px;line-height:19px">Editor</div>
<div class="lbl" style="left:718px;top:643px;font-size:13px">von</div>
<div class="lbl" style="left:796px;top:643px;font-size:13px">bis</div>
<div class="fld g" style="left:719px;top:659px;width:73px;height:19px;font-size:13px;line-height:17px;padding-left:3px;white-space:nowrap;overflow:hidden"></div>
<div class="fld g" style="left:797px;top:659px;width:72px;height:19px;font-size:13px;line-height:17px;padding-left:3px;white-space:nowrap;overflow:hidden"></div>
<div class="a" style="left:872px;top:648px;width:155px;height:37px;border:1px solid #dddfc2"></div>
<div class="a" style="left:873px;top:649px;width:155px;height:37px;border:1px solid #f8f8e6;border-bottom-width:1px"></div>
<div class="a" style="left:1028px;top:648px;width:352px;height:37px;border:1px solid #dddfc2"></div>
<div class="a" style="left:1029px;top:649px;width:352px;height:37px;border:1px solid #f8f8e6;border-bottom-width:1px"></div>
<div class="a" style="left:880px;top:646px;width:67px;height:6px;background:#dadada"></div>
<div class="a" style="left:1028px;top:646px;width:70px;height:12px;background:#dadada"></div>
<div class="lbl" style="left:889px;top:643px;font-size:13px">Auswahl</div>
<div class="lbl" style="left:1037px;top:643px;font-size:13px">Ausgabe</div>
<div class="btn" style="left:878px;top:659px;width:48px;height:19px;line-height:19px"><u>a</u>lle</div>
<div class="btn" style="left:928px;top:659px;width:46px;height:19px;line-height:19px"><u>k</u>einer</div>
<div class="btn" style="left:977px;top:659px;width:46px;height:19px;line-height:19px"><u>t</u>oggle</div>
<div class="btn" style="left:1036px;top:659px;width:104px;height:19px;line-height:19px">Dateiausgabe</div>
<div class="btn" style="left:1153px;top:659px;width:104px;height:19px;line-height:19px">Grafik Hinzufügen</div>
<div class="btn" style="left:1271px;top:659px;width:104px;height:19px;line-height:19px">Grafik Darstellen</div>
<div class="a" style="left:1397px;top:51px;width:368px;height:649px;background:#f6f6e2;border-radius:3px 4px 5px 3px;border-left:1px solid #a8a272;border-top:1px solid #a8a272;border-right:1px solid #000;border-bottom:1px solid #000;box-shadow:0 0.5px 0 #000"></div>
<div class="a" style="left:1400px;top:72px;width:362px;height:625px;background:#dadada;border-radius:0 0 2px 0"></div>
<div class="a" style="left:1398px;top:52px;width:366px;height:20px;background:#6699cc;border-radius:2px 3px 0 0"></div>
<svg class="a" style="left:1400px;top:54px" width="17" height="17" viewBox="0 0 17 17"><circle cx="5.500" cy="5" r="4.800" fill="#1a2a9a"/><path d="M1.500 3 C3.500 4 3.500 7 2 8.500" stroke="#5ac87a" stroke-width="1.600" fill="none"/><path d="M4 1 L5 2 M7 1 L8 2" stroke="#b8c8ff" stroke-width="0.800"/><rect x="3.600" y="4.600" width="12.400" height="11.400" fill="#fff" stroke="#000" stroke-width="1.200"/><rect x="11" y="6" width="3" height="1.500" fill="#1a1ae0"/><rect x="9.500" y="8.500" width="5" height="1.200" fill="#e82020"/><rect x="10" y="10.500" width="4" height="1.200" fill="#e82020"/><rect x="9" y="12.500" width="3.500" height="1.200" fill="#e82020"/><rect x="13" y="13" width="2" height="2" fill="#1a1ae0"/><path d="M9.500 5.500 L4.500 11.500 H7.500 L5 15.800 L11 9.500 H8.300 L10.800 5.500 Z" fill="#ffff00" stroke="#222" stroke-width="0.500"/></svg>
<div class="t" style="left:1418px;top:56px;font-size:12px;line-height:14px;color:#eef0e6;letter-spacing:0.14px">Kategorieübersicht</div>
<svg class="a" style="left:1748px;top:56px" width="12" height="12" viewBox="0 0 12 12"><path d="M1.500 1.500 L10.500 10.500 M10.500 1.500 L1.500 10.500" stroke="#6c6c6c" stroke-width="1.900"/></svg>
<svg class="a" style="left:1732px;top:56px" width="12" height="12" viewBox="0 0 12 12"><path d="M0.500 10.500 H9" stroke="#6c6c6c" stroke-width="1.700"/><path d="M10.500 1.500 L5 7 M4.700 3.500 V7.300 H8.500" fill="none" stroke="#6c6c6c" stroke-width="1.700"/></svg>
<div class="a" style="left:1406px;top:83px;width:348px;height:604px;border:1px solid #dddfc2"></div>
<div class="a" style="left:1407px;top:84px;width:348px;height:604px;border:1px solid #f8f8e6;border-bottom-width:1px"></div>
<div class="a" style="left:1393px;top:400px;width:4px;height:17px;background:#e8a8b8"></div>
<div class="a" style="left:1393px;top:423px;width:4px;height:19px;background:#e8a8b8"></div>
<div class="a" style="left:1394px;top:478px;width:3px;height:26px;background:#f6d4da"></div>
<div class="a" style="left:1440px;top:90px;width:131px;height:21px;border:1px solid #e0e0be;border-radius:3px;background:#dadada;font-size:11px;line-height:20px;padding-left:3px;letter-spacing:0px">Suche</div>
<div class="a" style="left:1577px;top:91px;width:19px;height:19px;border:1px solid #e0e0be;border-radius:3px;background:#dadada;font-size:11px;line-height:17px;text-align:center;white-space:nowrap;letter-spacing:-0.24px"></div>
<svg class="a" style="left:1579px;top:93px" width="16" height="15" viewBox="0 0 16 15"><path d="M1.500 1.500 H6 L8 3.500 V8.500 H1.500 Z" fill="#fff" stroke="#111" stroke-width="0.900"/><path d="M3 4 H6.500 M3 6 H6.500" stroke="#555" stroke-width="0.700"/><circle cx="12.500" cy="7" r="2.300" fill="none" stroke="#111" stroke-width="1"/><path d="M11 9 L6 14" stroke="#111" stroke-width="1.400"/></svg>
<div class="a" style="left:1654px;top:91px;width:95px;height:19px;border:1px solid #e0e0be;border-radius:3px;background:#dadada;font-size:11px;line-height:17px;text-align:center;white-space:nowrap;letter-spacing:-0.24px">Einstellungen</div>
<div class="a" style="left:1414px;top:117px;width:19px;height:19px;border:1px solid #e0e0be;border-radius:3px;background:#dadada;font-size:11px;line-height:17px;text-align:center;white-space:nowrap;letter-spacing:-0.24px"></div>
<div class="a" style="left:1414px;top:141px;width:19px;height:19px;border:1px solid #e0e0be;border-radius:3px;background:#dadada;font-size:11px;line-height:17px;text-align:center;white-space:nowrap;letter-spacing:-0.24px"></div>
<div class="a" style="left:1414px;top:174px;width:19px;height:19px;border:1px solid #e0e0be;border-radius:3px;background:#dadada;font-size:11px;line-height:17px;text-align:center;white-space:nowrap;letter-spacing:-0.24px"></div>
<div class="a" style="left:1414px;top:199px;width:19px;height:19px;border:1px solid #e0e0be;border-radius:3px;background:#dadada;font-size:11px;line-height:17px;text-align:center;white-space:nowrap;letter-spacing:-0.24px"></div>
<div class="a" style="left:1414px;top:224px;width:19px;height:19px;border:1px solid #e0e0be;border-radius:3px;background:#dadada;font-size:11px;line-height:17px;text-align:center;white-space:nowrap;letter-spacing:-0.24px"></div>
<div class="a" style="left:1414px;top:250px;width:19px;height:19px;border:1px solid #e0e0be;border-radius:3px;background:#dadada;font-size:11px;line-height:17px;text-align:center;white-space:nowrap;letter-spacing:-0.24px"></div>
<svg class="a" style="left:1415px;top:118px" width="17" height="17" viewBox="0 0 17 17"><path d="M2 3.500 L6 1.500 H15 V13 H2 Z" fill="#f4f4f4"/><path d="M2 6 L8 1.500" stroke="#888" stroke-width="0.800"/></svg>
<svg class="a" style="left:1415px;top:142px" width="17" height="17" viewBox="0 0 17 17"><path d="M2.500 4.500 H14.500 L13 15.500 H4 Z" fill="#eee" stroke="#a0a0a0" stroke-width="0.900"/><ellipse cx="8.500" cy="4" rx="6" ry="1.800" fill="#e4e4e4" stroke="#a0a0a0" stroke-width="0.900"/><path d="M5.500 7 V14 M7.500 7 V14 M9.500 7 V14 M11.500 7 V14" stroke="#a8a8a8" stroke-width="0.900"/></svg>
<svg class="a" style="left:1415px;top:175px" width="17" height="17" viewBox="0 0 17 17"><path d="M7.5 3.5 h3 v3 h3 v3 h-3 v3 h-3 v-3 h-3 v-3 h3 Z" fill="#111"/><path d="M6.5 2.5 h3 v3 h3 v3 h-3 v3 h-3 v-3 h-3 v-3 h3 Z" fill="#fff"/></svg>
<svg class="a" style="left:1415px;top:200px" width="17" height="17" viewBox="0 0 17 17"><rect x="4.500" y="7.500" width="9" height="3" fill="#111"/><rect x="3.500" y="6.500" width="9" height="3" fill="#fff"/></svg>
<svg class="a" style="left:1415px;top:225px" width="17" height="17" viewBox="0 0 17 17"><path d="M5 2 h2 v2 h2 v2 h-2 v2 h-2 v-2 h-2 v-2 h2 Z" fill="#111"/><path d="M4 1 h2 v2 h2 v2 h-2 v2 h-2 v-2 h-2 v-2 h2 Z" fill="#fff"/><path d="M11 8 h2 v2 h2 v2 h-2 v2 h-2 v-2 h-2 v-2 h2 Z" fill="#111"/><path d="M10 7 h2 v2 h2 v2 h-2 v2 h-2 v-2 h-2 v-2 h2 Z" fill="#fff"/></svg>
<svg class="a" style="left:1415px;top:251px" width="17" height="17" viewBox="0 0 17 17"><rect x="2.500" y="4.500" width="7" height="2.500" fill="#111"/><rect x="1.500" y="3.500" width="7" height="2.500" fill="#fff"/><rect x="8" y="10.500" width="7" height="2.500" fill="#111"/><rect x="7" y="9.500" width="7" height="2.500" fill="#fff"/></svg>
<div class="a" style="left:1439px;top:115px;width:310px;height:440px;background:#d0d6ac;border-radius:4px"></div>
<div class="a" style="left:1440px;top:116px;width:293px;height:421px;background:#ffffdf;border-radius:3px 0 0 0;overflow:hidden"></div>
<div class="a" style="left:1450px;top:116px;width:1px;height:421px;background:#111"></div>
<div class="a" style="left:1468px;top:116px;width:1px;height:421px;background:#111"></div>
<div class="a" style="left:1486px;top:116px;width:1px;height:421px;background:#111"></div>
<div class="a" style="left:1487px;top:127px;width:8px;height:1px;background:#111"></div>
<div class="tr" style="left:1496px;top:118px;width:236px;overflow:hidden;letter-spacing:-0.1px">Generierter Fahrplan für gemessene Marktlokationen</div>
<div class="a" style="left:1487px;top:148px;width:8px;height:1px;background:#111"></div>
<div class="tr" style="left:1496px;top:139px;width:236px;overflow:hidden;letter-spacing:-0.1px">Gruppennormierungsfaktor</div>
<div class="a" style="left:1487px;top:169px;width:8px;height:1px;background:#111"></div>
<div class="tr" style="left:1496px;top:160px;width:236px;overflow:hidden;letter-spacing:-0.1px">IAL: Importiertes ausgerolltes Lastprofil (Sicht Lieferant)</div>
<div class="a" style="left:1487px;top:190px;width:8px;height:1px;background:#111"></div>
<div class="tr" style="left:1496px;top:181px;width:236px;overflow:hidden;letter-spacing:-0.1px">IAL: Importiertes ausgerolltes Lastprofil (Sicht Netzbetreiber)</div>
<div class="a" style="left:1487px;top:211px;width:8px;height:1px;background:#111"></div>
<div class="tr" style="left:1496px;top:202px;width:236px;overflow:hidden;letter-spacing:-0.17px">Importierte Bilanzkreissummenzeitreihe (Sicht BKV)</div>
<div class="a" style="left:1487px;top:232px;width:8px;height:1px;background:#111"></div>
<div class="tr" style="left:1496px;top:223px;width:236px;overflow:hidden;letter-spacing:-0.15px">Importierte Lieferantensummenzeitreihe (Sicht BKV)</div>
<div class="a" style="left:1487px;top:253px;width:8px;height:1px;background:#111"></div>
<div class="tr" style="left:1496px;top:244px;width:236px;overflow:hidden;letter-spacing:-0.1px">Importierte Temperaturmaßzahlen</div>
<div class="a" style="left:1487px;top:274px;width:8px;height:1px;background:#111"></div>
<div class="tr" style="left:1496px;top:265px;width:236px;overflow:hidden;letter-spacing:-0.22px">Importierte bilanzierte Menge im Monat pro RLM-Entnahme</div>
<div class="a" style="left:1487px;top:295px;width:8px;height:1px;background:#111"></div>
<div class="tr" style="left:1496px;top:286px;width:236px;overflow:hidden;letter-spacing:-0.22px">Importierte bilanzierte Menge im Monat pro SLP-Entnahme</div>
<div class="a" style="left:1487px;top:316px;width:8px;height:1px;background:#111"></div>
<div class="tr" style="left:1496px;top:307px;width:236px;overflow:hidden;letter-spacing:-0.2px">Importierte bilanzierte Tagesmenge pro SLP-Entnahme</div>
<div class="a" style="left:1487px;top:337px;width:8px;height:1px;background:#111"></div>
<div class="tr" style="left:1496px;top:328px;width:236px;overflow:hidden;letter-spacing:-0.2px">Importierte bilanzierte Tagesmenge pro SLP-Entnahme</div>
<div class="a" style="left:1487px;top:358px;width:8px;height:1px;background:#111"></div>
<div class="tr" style="left:1496px;top:349px;width:236px;overflow:hidden;letter-spacing:-0.1px">Kumulierte Temperaturmaßzahl</div>
<div class="a" style="left:1487px;top:379px;width:8px;height:1px;background:#111"></div>
<div class="tr" style="left:1496px;top:370px;width:236px;overflow:hidden;letter-spacing:-0.1px">Kumulierte prognostizierte Temperaturmaßzahl</div>
<div class="a" style="left:1487px;top:400px;width:8px;height:1px;background:#111"></div>
<div class="tr" style="left:1496px;top:391px;width:236px;overflow:hidden;letter-spacing:-0.046px">Kumulierter Jahresverbrauch Lieferanten</div>
<div class="a" style="left:1487px;top:421px;width:8px;height:1px;background:#111"></div>
<div class="tr" style="left:1496px;top:412px;width:236px;overflow:hidden;letter-spacing:-0.025px">Kumulierter Jahresverbrauch Lieferanten (Sicht Lieferant)</div>
<div class="a" style="left:1487px;top:442px;width:8px;height:1px;background:#111"></div>
<div class="tr" style="left:1496px;top:433px;width:236px;overflow:hidden;letter-spacing:-0.1px">LGS/BG: Lastgangsumme pro Bilanzgruppe</div>
<div class="a" style="left:1487px;top:463px;width:8px;height:1px;background:#111"></div>
<div class="tr" style="left:1496px;top:454px;width:236px;overflow:hidden;letter-spacing:-0.1px">LGS/LE: Lastgangsumme pro Lieferant/Erzeuger</div>
<div class="a" style="left:1487px;top:484px;width:8px;height:1px;background:#111"></div>
<div class="tr" style="left:1496px;top:475px;width:236px;overflow:hidden;letter-spacing:-0.1px">LGS: Lastgangsumme (Sicht Lieferant)</div>
<div class="a" style="left:1487px;top:505px;width:8px;height:1px;background:#111"></div>
<div class="tr" style="left:1496px;top:496px;width:236px;overflow:hidden;letter-spacing:-0.1px">LGS: Lastgangsumme (Sicht ÜNB)</div>
<div class="a" style="left:1487px;top:526px;width:8px;height:1px;background:#111"></div>
<div class="a" style="left:1495px;top:517px;width:169px;height:20px;background:#808080;border-radius:2px"></div>
<div class="tr" style="left:1496px;top:517px;color:#e8e8e8">LGS: Lastgangsumme Bilanzkreise</div>
<div class="a" style="left:1734px;top:299px;width:13px;height:33px;background:#f5f5e6"></div>
<div class="a" style="left:1734px;top:117px;width:13px;height:15px;background:#f5f5e6;border-radius:6px 6px 0 0"></div>
<div class="a" style="left:1734px;top:522px;width:13px;height:14px;background:#f5f5e6;border-radius:0 0 6px 6px"></div>
<div class="a" style="left:1736px;top:122px;border:4px solid transparent;border-bottom:4px solid #555;border-top:0"></div>
<div class="a" style="left:1736px;top:527px;border:4px solid transparent;border-top:4px solid #555;border-bottom:0"></div>
<div class="a" style="left:1441px;top:538px;width:14px;height:13px;background:#f5f5e6;border-radius:6px 0 0 6px"></div>
<div class="a" style="left:1455px;top:538px;width:186px;height:13px;background:#f5f5e6"></div>
<div class="a" style="left:1718px;top:538px;width:14px;height:13px;background:#f5f5e6;border-radius:0 6px 6px 0"></div>
<div class="a" style="left:1445px;top:540px;border:4px solid transparent;border-right:4px solid #555;border-left:0"></div>
<div class="a" style="left:1722px;top:540px;border:4px solid transparent;border-left:4px solid #555;border-right:0"></div>
<div class="a" style="left:1439px;top:555px;width:309px;height:129px;background:#ffffdf;border-radius:3px;box-shadow:0 0 0 1px #e8e8cc"></div>
<div class="t" style="left:1442px;top:559px;font-size:11px;line-height:13px;color:#08087a;letter-spacing:0px">Kategorie Alle</div>
<div class="a" style="left:1733px;top:556px;width:14px;height:127px;background:#f5f5e6;border:1px solid #e0e0c4;border-radius:6px"></div>
<div class="a" style="left:1736px;top:561px;border:4px solid transparent;border-bottom:4px solid #555;border-top:0"></div>
<div class="a" style="left:1736px;top:672px;border:4px solid transparent;border-top:4px solid #555;border-bottom:0"></div>
<div class="a" style="z-index:50;left:40px;top:165px;width:488px;height:37px;background:#ffffe1;border:1px solid #7a7a7a;box-shadow:2px 2px 3px rgba(0,0,0,.35)"></div>
<div class="lt" style="z-index:51;left:44px;top:168px;letter-spacing:-0.05px">EDM &gt;&gt; EDM &gt;&gt; Zeitreihen &gt;&gt; Bearbeiten/Visualisieren von Zeitreihen</div>
<div class="lt" style="z-index:51;left:50px;top:183px;letter-spacing:-0.324px">Funktion: Bearbeiten/Visualisieren von Zeitreihen [ZEITREI.FMX (PARA_AUFRUFART=EDM)]</div>
</body></html>
